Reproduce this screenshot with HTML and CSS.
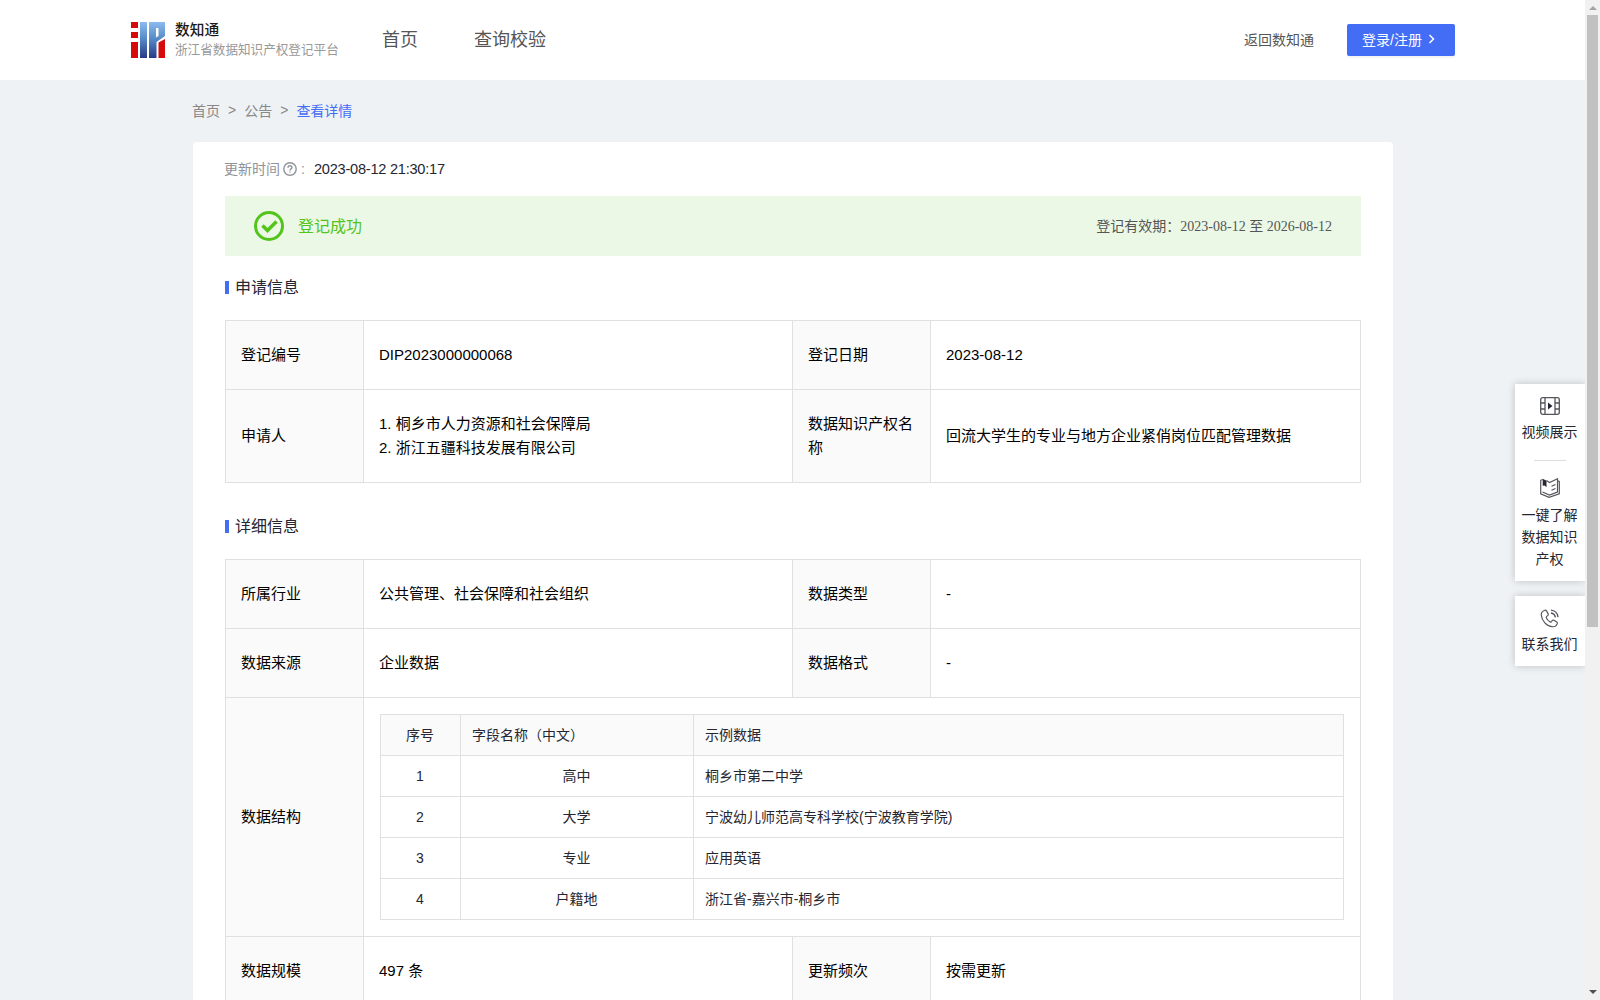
FILE: index.html
```html
<!DOCTYPE html>
<html lang="zh-CN">

<head>
    <meta charset="UTF-8">
    <meta name="viewport" content="width=device-width, initial-scale=1.0">
    <title>数知通 - 浙江省数据知识产权登记平台</title>
    <link rel="stylesheet" href="styles.css">
</head>

<body>
    <div class="page">
        <header class="header">
            <svg class="logo" width="34" height="36" viewBox="0 0 34 36">
                <defs>
                    <linearGradient id="blue" x1="0" y1="0" x2="0" y2="1">
                        <stop offset="0" stop-color="#8dbbee" />
                        <stop offset="0.45" stop-color="#588cc9" />
                        <stop offset="1" stop-color="#273a86" />
                    </linearGradient>
                </defs>
                <path fill="#d50a0c" d="M0 0h7v6H0zM0 10h7v6H0zM0 20h7v16H0zM27.500 20.500L34 17v19h-6.500z" />
                <path fill="url(#blue)" d="M9 0h7v36H9zM18 0h16v14l-8.500 6V36H18z" />
                <path fill="#fff" d="M25 6h2.500v8L25 15.500z" />
            </svg>
            <div class="brand">
                <div class="brand-name">数知通</div>
                <div class="brand-sub">浙江省数据知识产权登记平台</div>
            </div>
            <nav class="nav">
                <a>首页</a>
                <a>查询校验</a>
            </nav>
            <a class="back">返回数知通</a>
            <button class="login" type="button">
                <span>登录/注册</span>
                <svg width="8" height="10" viewBox="0 0 8 10" fill="none" stroke="#fff" stroke-width="1.500">
                    <path d="M1.500 1l4 4-4 4" />
                </svg>
            </button>
        </header>

        <div class="breadcrumb">
            <span>首页</span><span>&gt;</span><span>公告</span><span>&gt;</span><span class="current">查看详情</span>
        </div>

        <main class="card">
            <div class="update">
                <span class="update-label">更新时间</span>
                <svg width="14" height="14" viewBox="0 0 14 14" fill="none" stroke="#909399" stroke-width="1.400">
                    <circle cx="7" cy="7" r="6.200" />
                    <path d="M5 5.700c0-2.600 4-2.500 4-.200 0 1.400-2 1.300-2 2.900M7 9.400v1.200" />
                </svg>
                <span class="update-colon">:</span>
                <span class="update-time">2023-08-12 21:30:17</span>
            </div>

            <div class="banner">
                <svg width="30" height="30" viewBox="0 0 30 30" fill="none" stroke="#52c41a">
                    <circle cx="15" cy="15" r="13.500" stroke-width="3" />
                    <path d="M8.500 14.500l5 5 9-9" stroke-width="3.500" />
                </svg>
                <span class="banner-state">登记成功</span>
                <span class="banner-valid">登记有效期：2023-08-12 至 2026-08-12</span>
            </div>

            <h2 class="section-title">申请信息</h2>
            <table class="info">
                <colgroup><col class="c-label"><col class="c-left"><col class="c-label2"><col class="c-right"></colgroup>
                <tr class="row">
                    <th>登记编号</th>
                    <td>DIP2023000000068</td>
                    <th>登记日期</th>
                    <td>2023-08-12</td>
                </tr>
                <tr class="row-tall">
                    <th>申请人</th>
                    <td>1. 桐乡市人力资源和社会保障局<br>2. 浙江五疆科技发展有限公司</td>
                    <th>数据知识产权名称</th>
                    <td>回流大学生的专业与地方企业紧俏岗位匹配管理数据</td>
                </tr>
            </table>

            <h2 class="section-title second">详细信息</h2>
            <table class="info">
                <colgroup><col class="c-label"><col class="c-left"><col class="c-label2"><col class="c-right"></colgroup>
                <tr class="row">
                    <th>所属行业</th>
                    <td>公共管理、社会保障和社会组织</td>
                    <th>数据类型</th>
                    <td>-</td>
                </tr>
                <tr class="row">
                    <th>数据来源</th>
                    <td>企业数据</td>
                    <th>数据格式</th>
                    <td>-</td>
                </tr>
                <tr class="row-fields">
                    <th>数据结构</th>
                    <td colspan="3">
                        <table class="fields">
                            <colgroup><col class="f-no"><col class="f-name"><col></colgroup>
                            <tr class="fields-head"><td>序号</td><td>字段名称（中文）</td><td>示例数据</td></tr>
                            <tr><td>1</td><td>高中</td><td>桐乡市第二中学</td></tr>
                            <tr><td>2</td><td>大学</td><td>宁波幼儿师范高专科学校(宁波教育学院)</td></tr>
                            <tr><td>3</td><td>专业</td><td>应用英语</td></tr>
                            <tr><td>4</td><td>户籍地</td><td>浙江省-嘉兴市-桐乡市</td></tr>
                        </table>
                    </td>
                </tr>
                <tr class="row">
                    <th>数据规模</th>
                    <td>497 条</td>
                    <th>更新频次</th>
                    <td>按需更新</td>
                </tr>
            </table>
        </main>
    </div>

    <aside class="side">
        <div class="side-box">
            <div class="side-item">
                <svg width="20" height="18" viewBox="0 0 20 18" fill="none" stroke="#55565c" stroke-width="1.300">
                    <rect x=".7" y=".7" width="18.600" height="16.600" rx="2" />
                    <path d="M5 1v16M15 1v16M1 6h4M1 12h4M15 6h4M15 12h4" />
                    <path d="M8 5.500v7l4.500-3.500z" fill="#252631" stroke="none" />
                </svg>
                <span>视频展示</span>
            </div>
            <div class="side-line"></div>
            <div class="side-item">
                <svg width="20" height="20" viewBox="0 0 20 20" fill="none" stroke="#55565c" stroke-width="1.200">
                    <path d="M2.500 1.500L.7 2.300v13.500L9 19.300l10.300-3.500V3.500l-1.800-.7" />
                    <path d="M6.500 2.500l3 2L17.500.8V14L9.500 17l-7-3M11.500 8.200l4-1.700M11.500 12.200l4-1.700" />
                    <path d="M2.700.8l3.800 2v6.400L4.600 7.500l-1.900.3z" fill="#252631" stroke="none" />
                </svg>
                <span>一键了解数据知识产权</span>
            </div>
        </div>
        <div class="side-box contact">
            <div class="side-item">
                <svg width="20" height="19" viewBox="0 0 20 20" fill="none" stroke="#55565c" stroke-width="1.200">
                    <path d="M4.500 1.300C2 2.200.7 4 .8 6.200c.4 6 5.600 12 12 12.500 2.200.1 4.200-1.300 4.900-3.300.3-.8 0-1.300-.6-1.700l-3-1.800c-.7-.4-1.300-.3-1.800.3l-.9 1.200c-.5.500-1 .5-1.600.1-1.800-1.100-3-2.500-3.700-4.200-.2-.6-.1-1.100.4-1.500l1.200-.9c.6-.5.7-1.100.4-1.800L6.300 2c-.4-.7-1-1-1.800-.7z" />
                    <path stroke-width="1.500" d="M11 1.200c4 .2 7 3.300 7.500 7.300M11 4.200c2.500.3 4.200 2 4.700 4.500" />
                </svg>
                <span>联系我们</span>
            </div>
        </div>
    </aside>

    <div class="scrollbar">
        <div class="arrow-up"></div>
        <div class="thumb"></div>
        <div class="arrow-down"></div>
    </div>
</body>

</html>
```

FILE: styles.css
```css
* {
    box-sizing: border-box;
}

body {
    margin: 0;
    height: 1000px;
    overflow: hidden;
    display: flex;
    background-color: #eef2f5;
    font-family: "Liberation Sans", "Noto Sans CJK SC", sans-serif;
    font-size: 14px;
    color: #252631;
}

.page {
    width: 1585px;
    height: 1000px;
    overflow: hidden;
    flex: none;
}

/* header */
.header {
    height: 80px;
    padding: 0 130px 0 131px;
    display: flex;
    align-items: center;
    background-color: #fff;
}

.brand {
    margin-left: 10px;
    width: 164px;
    padding-top: 1px;
    white-space: nowrap;
}

.brand-name {
    font-size: 14.7px;
    line-height: 19px;
    font-weight: 500;
    color: #1a1a1a;
}

.brand-sub {
    font-size: 12.6px;
    line-height: 20px;
    color: #999;
}

.nav {
    margin-left: 43px;
    display: flex;
    gap: 56px;
    font-size: 18px;
    line-height: 28px;
    color: #555;
}

.back {
    margin-left: auto;
    padding-bottom: 2px;
    color: #555;
}

.login {
    margin-left: 33px;
    width: 108px;
    height: 32px;
    padding: 0 0 2px 15px;
    display: flex;
    align-items: center;
    gap: 6px;
    border: none;
    border-radius: 2px;
    background-color: #446df6;
    box-shadow: 0 2px 0 rgba(0, 0, 0, 0.045);
    color: #fff;
    font-family: inherit;
    font-size: 14px;
}

.breadcrumb {
    height: 62px;
    padding: 0 0 2px 192px;
    display: flex;
    align-items: center;
    gap: 8px;
    color: #888;
}

.breadcrumb .current {
    color: #446df6;
}

/* content card */
.card {
    width: 1200px;
    height: 1000px;
    margin-left: 193px;
    padding: 16px 32px 0;
    border-radius: 4px;
    background-color: #fff;
}

.update {
    height: 22px;
    display: flex;
    align-items: center;
    color: #909399;
}

.update-label {
    margin-left: -1px;
    padding-bottom: 2px;
}

.update svg {
    margin-left: 3px;
}

.update-colon {
    width: 16px;
    padding-left: 4px;
}

.update-time {
    margin-left: 1px;
    font-size: 14.6px;
    letter-spacing: -0.25px;
    color: #252631;
}

.banner {
    height: 60px;
    margin-top: 16px;
    padding: 0 29px;
    display: flex;
    align-items: center;
    background-color: #ebf8e6;
}

.banner-state {
    margin-left: 14px;
    padding-bottom: 3px;
    font-size: 16px;
    color: #52c41a;
}

.banner-valid {
    margin-left: auto;
    padding-bottom: 3px;
    font-family: "Liberation Serif", "Noto Sans CJK SC", serif;
    color: #555;
}

.section-title {
    height: 24px;
    margin: 18px 0 22px;
    display: flex;
    align-items: center;
    font-size: 16px;
    font-weight: normal;
}

.section-title::before {
    content: "";
    width: 4px;
    height: 13px;
    margin: 3px 6px 0 0;
    background-color: #446df6;
}

.section-title.second {
    margin: 30px 0 22px;
}

/* tables */
table {
    border-collapse: collapse;
    table-layout: fixed;
    width: 100%;
}

td,
th {
    border: 1px solid #e0e0e0;
    text-align: left;
    font-weight: normal;
}

.info {
    font-size: 15px;
    line-height: 24px;
    color: #000;
}

.info th,
.info td {
    padding: 0 16px 1px 15px;
}

.info th {
    background-color: #fafafa;
}

.info .row-fields > td {
    padding: 0 16px;
}

.c-label,
.c-label2 {
    width: 138px;
}

.c-left {
    width: 429px;
}

.row {
    height: 69px;
}

.row-tall {
    height: 93px;
}

.row-fields {
    height: 239px;
}

.info .fields {
    font-size: 14px;
    color: #252631;
}

.fields tr {
    height: 41px;
}

.info .fields td {
    padding: 0 11px 1px;
}

.info .fields td:nth-child(1),
.info .fields td:nth-child(2) {
    padding-right: 12px;
    text-align: center;
}

.fields .fields-head {
    background-color: #fafafa;
}

.info .fields .fields-head td:nth-child(2) {
    text-align: left;
}

.f-no {
    width: 80px;
}

.f-name {
    width: 233px;
}

/* floating side menu */
.side {
    position: absolute;
    left: 1515px;
    top: 384px;
    width: 70px;
}

.side-box {
    height: 197px;
    padding-top: 13px;
    background-color: #fff;
    box-shadow: 0 0 8px rgba(0, 0, 0, 0.2);
    clip-path: inset(-10px 0 -10px -10px);
}

.side-box.contact {
    height: 70px;
    margin-top: 15px;
}

.side-item {
    padding: 0 7px 0 6px;
    display: flex;
    flex-direction: column;
    align-items: center;
    gap: 6px;
    line-height: 22px;
    text-align: center;
}

.contact .side-item {
    gap: 5px;
}

.side-line {
    width: 32px;
    height: 1px;
    margin: 17px auto;
    background-color: #ddd;
}

/* scrollbar */
.scrollbar {
    width: 15px;
    flex: none;
    display: flex;
    flex-direction: column;
    align-items: center;
    background-color: #f1f1f1;
}

.arrow-up,
.arrow-down {
    border-left: 4px solid transparent;
    border-right: 4px solid transparent;
}

.arrow-up {
    margin: 6px 0 5px;
    border-bottom: 4px solid #a3a3a3;
}

.thumb {
    width: 11px;
    height: 612px;
    background-color: #c1c1c1;
}

.arrow-down {
    margin: auto 0 6px;
    border-top: 4px solid #505050;
}
```
